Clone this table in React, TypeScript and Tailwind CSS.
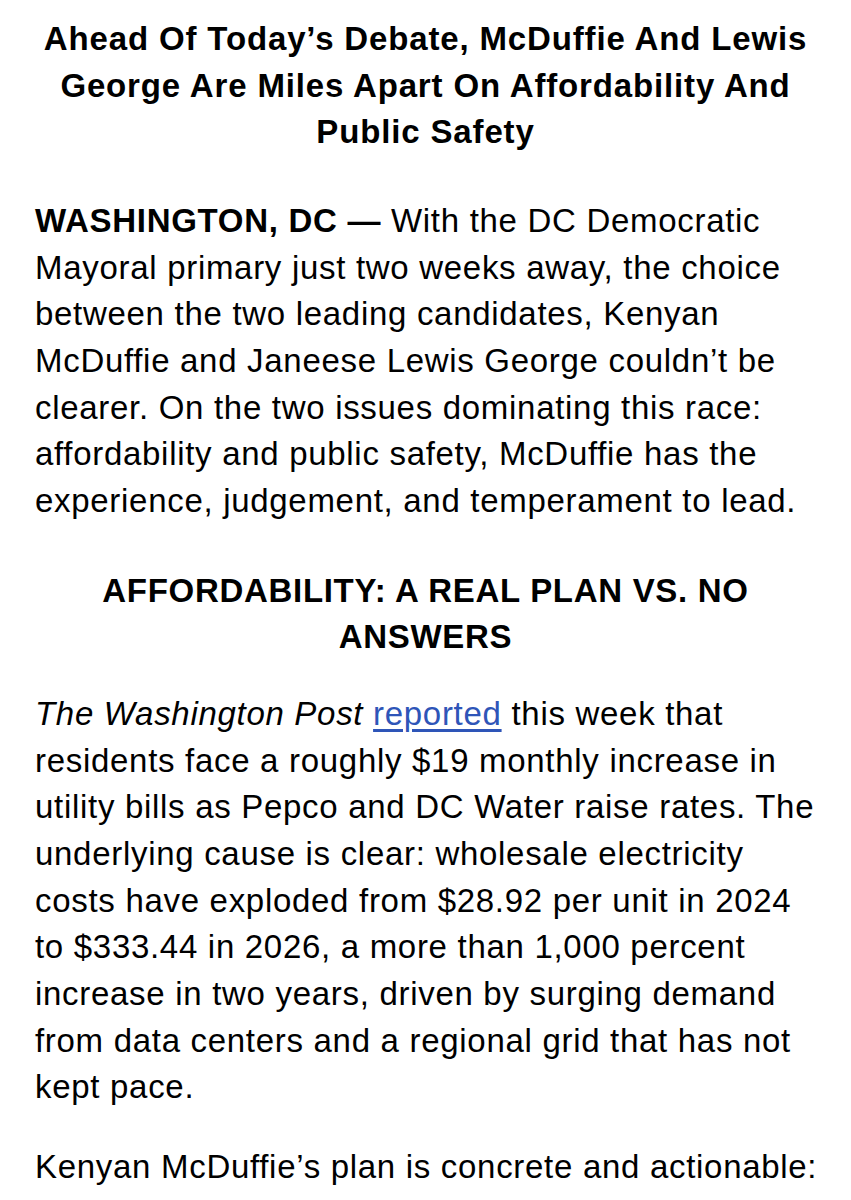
const Article = () => {
  return (
    <div className="min-h-screen bg-white text-black font-['Helvetica_Neue','Liberation_Sans',Arial,sans-serif]">
      <div className="pt-[16px] text-[33px] leading-[46.67px] tracking-[0.7px]">
        {/* Headline */}
        <h1 className="px-[30px] text-center font-bold tracking-[0.85px]">
          Ahead Of Today’s Debate, McDuffie And Lewis George Are Miles Apart On Affordability And Public Safety
        </h1>

        <p className="mt-[42px] pl-[35px] pr-[26px]">
          <strong className="font-bold">WASHINGTON, DC —</strong> With the DC Democratic Mayoral primary just two
          weeks away, the choice between the two leading candidates, Kenyan McDuffie and Janeese Lewis George
          couldn’t be clearer. On the two issues dominating this race: affordability and public safety, McDuffie has
          the experience, judgement, and temperament to lead.
        </p>

        <h2 className="mt-[43px] px-[95px] text-center font-bold">
          AFFORDABILITY: A REAL PLAN VS. NO ANSWERS
        </h2>

        <p className="mt-[30px] pl-[35px] pr-[26px]">
          <em>The Washington Post</em>{' '}
          <a href="#" className="text-[#2e55b8] underline decoration-[#2e55b8] underline-offset-[4px]">
            reported
          </a>{' '}
          this week that residents face a roughly $19 monthly increase in utility bills as Pepco and DC Water raise
          rates. The underlying cause is clear: wholesale electricity costs have exploded from $28.92 per unit in 2024
          to $333.44 in 2026, a more than 1,000 percent increase in two years, driven by surging demand from data
          centers and a regional grid that has not kept pace.
        </p>

        <p className="mt-[33px] pl-[35px] pr-[26px]">Kenyan McDuffie’s plan is concrete and actionable:</p>
      </div>
    </div>
  );
};

export default function App() {
  return <Article />;
}
